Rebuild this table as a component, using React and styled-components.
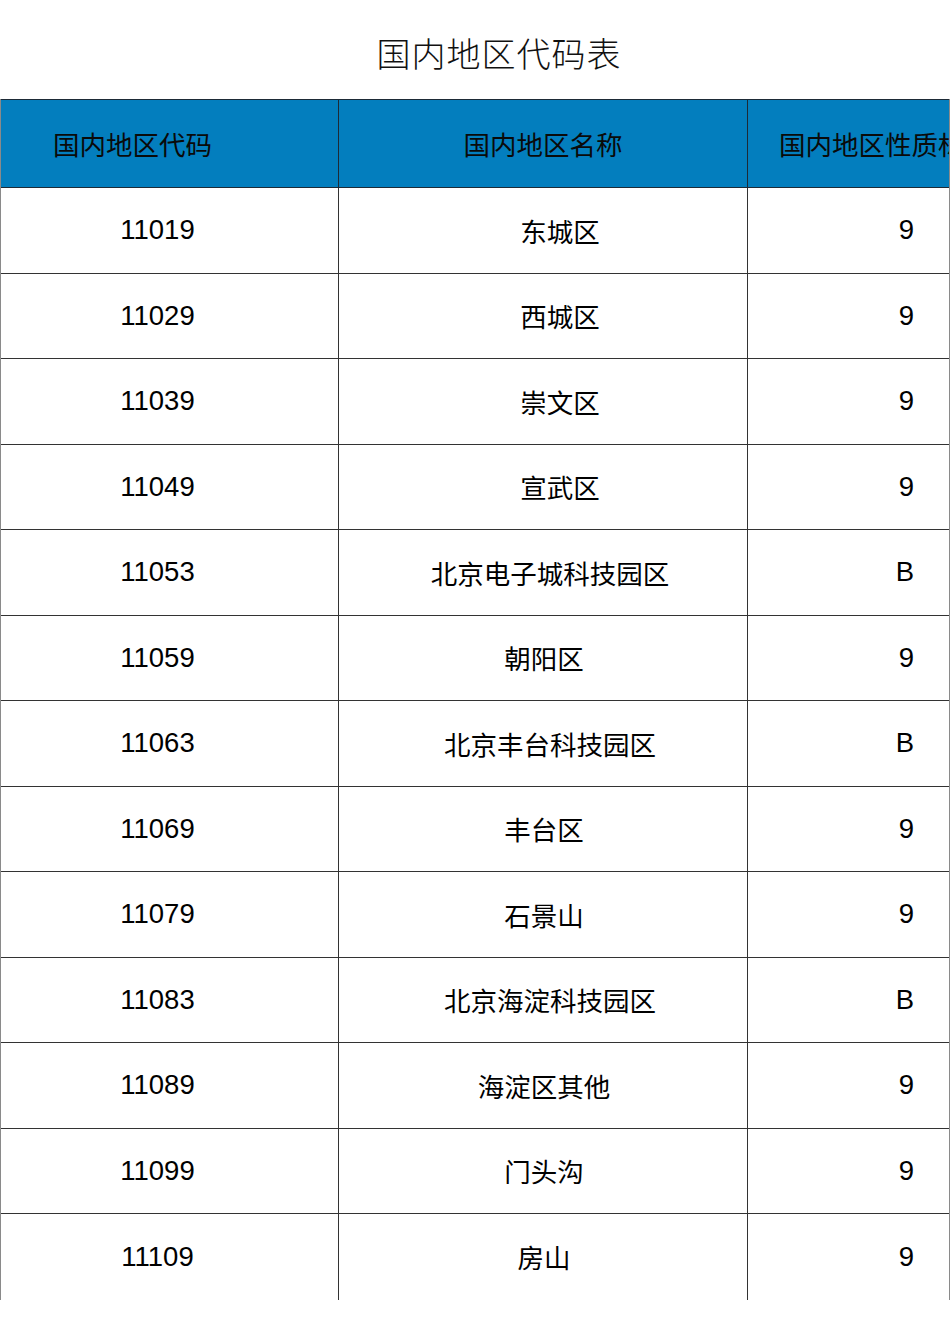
import styled, { createGlobalStyle } from 'styled-components';

const rows = [
  { code: '11019', name: '东城区', kind: '9', shift: 17 },
  { code: '11029', name: '西城区', kind: '9', shift: 17 },
  { code: '11039', name: '崇文区', kind: '9', shift: 17 },
  { code: '11049', name: '宣武区', kind: '9', shift: 17 },
  { code: '11053', name: '北京电子城科技园区', kind: 'B', shift: 7 },
  { code: '11059', name: '朝阳区', kind: '9', shift: 1 },
  { code: '11063', name: '北京丰台科技园区', kind: 'B', shift: 7 },
  { code: '11069', name: '丰台区', kind: '9', shift: 1 },
  { code: '11079', name: '石景山', kind: '9', shift: 1 },
  { code: '11083', name: '北京海淀科技园区', kind: 'B', shift: 7 },
  { code: '11089', name: '海淀区其他', kind: '9', shift: 1 },
  { code: '11099', name: '门头沟', kind: '9', shift: 1 },
  { code: '11109', name: '房山', kind: '9', shift: 1 },
];

export default function App() {
  return (
    <>
      <GlobalStyle />
      <StPage>
        <StTitle>国内地区代码表</StTitle>
        <StTable>
          <StHeadRow>
            <StHeadCell pad='0 0 0 52px' align='flex-start'>国内地区代码</StHeadCell>
            <StHeadCell>国内地区名称</StHeadCell>
            <StHeadCell pad='0 0 0 31px' align='flex-start' last>
              国内地区性质标志
            </StHeadCell>
          </StHeadRow>
          {rows.map((r, i) => (
            <StRow key={r.code} noBottom={i === rows.length - 1}>
              <StCell pad='0 24px 0 0' size='27.5px'>{r.code}</StCell>
              <StCell pad={`0 0 0 ${r.shift * 2}px`}>{r.name}</StCell>
              <StCell pad='0 35px 0 0' align='flex-end' size='27.5px' last>
                {r.kind}
              </StCell>
            </StRow>
          ))}
        </StTable>
      </StPage>
    </>
  );
}

const GlobalStyle = createGlobalStyle`
  html, body {
    margin: 0;
    padding: 0;
    background: #ffffff;
  }
  body {
    font-family: "Liberation Sans", "Noto Sans CJK SC", sans-serif;
    color: #000000;
  }
`;

const StPage = styled.div`
  width: 950px;
  height: 1344px;
  overflow: hidden;
  background: #ffffff;
`;

const StTitle = styled.div`
  height: 99px;
  display: flex;
  align-items: center;
  justify-content: center;
  padding: 6px 0 0 48px;
  box-sizing: border-box;
  font-family: "Noto Sans CJK SC", sans-serif;
  font-weight: 300;
  font-size: 34px;
  letter-spacing: 1px;
  color: #111111;
`;

const StTable = styled.div`
  width: 950px;
  border-left: 1px solid #8a8a8a;
  border-right: 1px solid #8a8a8a;
  box-sizing: border-box;
`;

const StHeadRow = styled.div`
  display: grid;
  grid-template-columns: 338px 409px 1fr;
  height: 89px;
  background-color: #037ebe;
  border-top: 1px solid #1d2a36;
  border-bottom: 1px solid #1d2a36;
  box-sizing: border-box;
`;

const StHeadCell = styled.div`
  display: flex;
  align-items: center;
  justify-content: ${(p) => p.align || 'center'};
  padding: ${(p) => p.pad || '0'};
  border-right: ${(p) => (p.last ? 'none' : '1px solid #1d2a36')};
  font-family: "Noto Sans CJK SC", sans-serif;
  font-size: 26.5px;
  color: #0a0a0a;
  white-space: nowrap;
  overflow: hidden;
  box-sizing: border-box;
`;

const StRow = styled.div`
  display: grid;
  grid-template-columns: 338px 409px 1fr;
  height: 85.5px;
  border-bottom: ${(p) => (p.noBottom ? 'none' : '1px solid #333333')};
  box-sizing: border-box;
`;

const StCell = styled.div`
  display: flex;
  align-items: center;
  justify-content: ${(p) => p.align || 'center'};
  padding: ${(p) => p.pad || '0'};
  border-right: ${(p) => (p.last ? 'none' : '1px solid #333333')};
  font-size: ${(p) => p.size || '26.5px'};
  color: #000000;
  white-space: nowrap;
  box-sizing: border-box;
`;
